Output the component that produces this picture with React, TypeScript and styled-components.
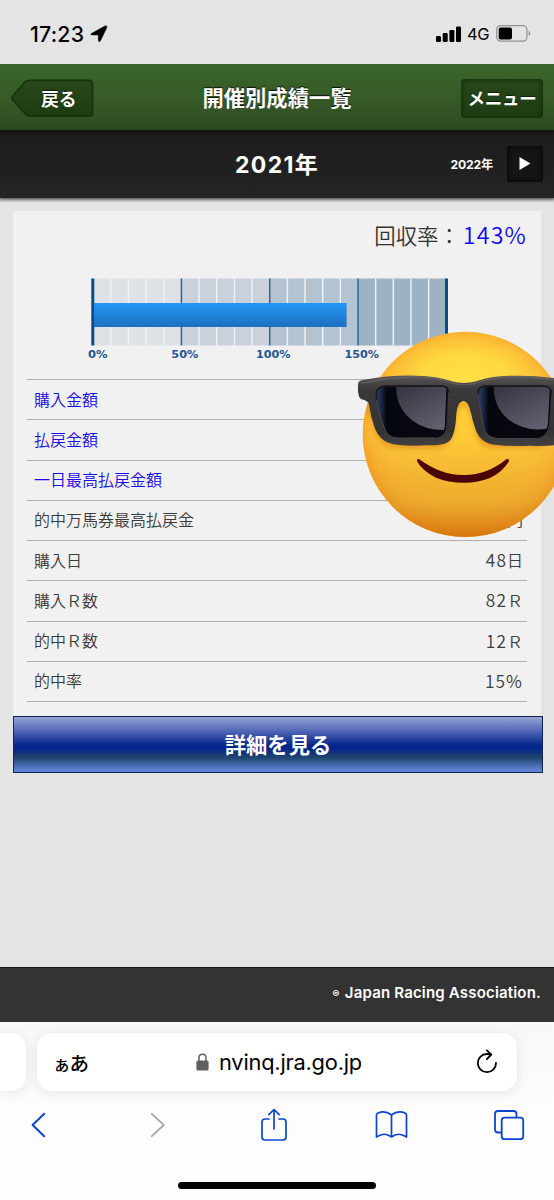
import React from "react";
import styled, { createGlobalStyle } from "styled-components";

const JP = '"Noto Sans CJK JP", sans-serif';
const UI = 'Inter, "Noto Sans CJK JP", sans-serif';

const GlobalStyle = createGlobalStyle`
  *, *::before, *::after { box-sizing: border-box; }
  html, body { margin: 0; padding: 0; background: #e4e4e4; }
  body { overflow: hidden; }
  svg { display: block; flex: none; }
`;

const Screen = styled.div`
  position: relative;
  width: 554px;
  height: 1200px;
  display: flex;
  flex-direction: column;
  overflow: hidden;
  background: #e4e4e4;
  font-family: ${JP};
`;

const StatusBar = styled.div`
  flex: none;
  height: 64px;
  padding: 3px 23px 0 30px;
  display: flex;
  align-items: center;
  color: #000;
  font-family: ${UI};
`;

const Clock = styled.span`
  width: 60px;
  font-size: 21.3px;
  font-weight: 500;
  letter-spacing: 0.2px;
  white-space: nowrap;
`;

const Network = styled.span`
  margin: 0 7px 0 6px;
  width: 22px;
  font-size: 16.5px;
  font-weight: 400;
  letter-spacing: -0.4px;
  white-space: nowrap;
`;

const Spacer = styled.div`
  flex: 1;
`;

const Header = styled.header`
  flex: none;
  height: 67px;
  padding: 2px 11px 0;
  display: flex;
  align-items: center;
  justify-content: space-between;
  background: linear-gradient(#3a652a, #365b27 50%, #2f4a22);
  border-bottom: 1px solid #1c2b14;
`;

const HeaderTitle = styled.h1`
  margin: -2px 1px 0 0;
  color: #fff;
  font-size: 21.3px;
  line-height: 30px;
  font-weight: 700;
  text-shadow: 0 -1px 1px rgba(0, 0, 0, 0.85);
`;

const BackButton = styled.div`
  position: relative;
  width: 83px;
  height: 39px;
  padding: 0 0 1px 30px;
  display: flex;
  align-items: center;
  color: #fff;
  font-size: 17.8px;
  font-weight: 700;
  text-shadow: 0 -1px 1px rgba(0, 0, 0, 0.6);

  svg { position: absolute; inset: 0; }
  span { position: relative; white-space: nowrap; }
`;

const MenuButton = styled.div`
  width: 82px;
  height: 39px;
  padding-bottom: 1px;
  display: flex;
  align-items: center;
  justify-content: center;
  border-radius: 4px;
  background: linear-gradient(#28491a, #1e3b12);
  box-shadow: inset 0 0 4px 1px #142c0b;
  color: #fff;
  font-size: 17.5px;
  font-weight: 700;
  letter-spacing: -0.3px;
  white-space: nowrap;
  text-shadow: 0 -1px 1px rgba(0, 0, 0, 0.6);
`;

const YearBar = styled.div`
  flex: none;
  height: 67px;
  padding: 0 11px 1px;
  display: grid;
  grid-template-columns: 1fr auto 1fr;
  align-items: center;
  background: linear-gradient(#121212, #1d1d1d 5px, #242424);
  box-shadow: 0 1px 3px 1px rgba(0, 0, 0, 0.6);
  color: #fff;
  font-family: ${UI};
  font-weight: 700;
`;

const CurrentYear = styled.div`
  grid-column: 2;
  padding-bottom: 3px;
  font-size: 23px;
  letter-spacing: 1.3px;
  white-space: nowrap;
`;

const NextYear = styled.div`
  display: flex;
  align-items: center;
  justify-content: flex-end;
  gap: 14px;
  font-size: 12.2px;

  span { padding-bottom: 1px; letter-spacing: -0.2px; }
`;

const NextButton = styled.div`
  width: 36px;
  height: 36px;
  display: flex;
  align-items: center;
  justify-content: center;
  border-radius: 3px;
  background: #151515;
  box-shadow: inset 0 0 4px 1px #050505;

  svg { margin-bottom: 2px; }
`;

const Content = styled.main`
  flex: 1;
  padding: 13px 11px 0 13px;
`;

const Card = styled.section`
  width: 528px;
  height: 505px;
  padding: 7px 14px 0;
  background: #f1f1f1;
`;

const Rate = styled.div`
  height: 34px;
  padding-bottom: 1px;
  display: flex;
  align-items: center;
  justify-content: flex-end;
  color: #333;
  font-size: 21.4px;
  font-weight: 350;
  line-height: 33px;
  white-space: nowrap;
`;

const RateValue = styled.span`
  margin-left: 3px;
  color: #1205ef;
  font-size: 23.2px;
  letter-spacing: 1.2px;
`;

const ChartBox = styled.div`
  height: 127px;
  padding: 26px 0 0 58px;
`;

const Stats = styled.dl`
  margin: 0;
  border-top: 1px solid #b0b0b0;
`;

const StatRow = styled.div<{ $link?: boolean }>`
  height: 40.25px;
  padding: 0 4px 2px 7px;
  display: flex;
  align-items: center;
  justify-content: space-between;
  border-bottom: 1px solid #b0b0b0;
  color: ${(p) => (p.$link ? "#1b0be8" : "#3b3b3b")};
  font-size: 16px;
  font-weight: 350;

  dt, dd { margin: 0; white-space: nowrap; }
`;

const Digits = styled.span`
  font-size: 17.3px;
  letter-spacing: 1.1px;
`;

const DetailButton = styled.div`
  height: 57px;
  padding-bottom: 2px;
  display: flex;
  align-items: center;
  justify-content: center;
  border: 1.5px solid #12264d;
  background: linear-gradient(#97a5d5, #5367b8 25%, #03258a 52%, #06268b 58%, #20456c 74%, #466bb4 88%, #6687de);
  color: #fff;
  font-size: 21.3px;
  font-weight: 700;
`;

const Footer = styled.footer`
  flex: none;
  height: 55px;
  padding: 0 13px 5px 0;
  display: flex;
  align-items: center;
  justify-content: flex-end;
  border-top: 1px solid #161616;
  background: #333;
  color: #fff;
  font-family: ${UI};
  font-size: 15px;
  font-weight: 600;
  letter-spacing: 0.18px;
  white-space: nowrap;
`;

const CopyrightMark = styled.span`
  margin-right: 5px;
  font-size: 8px;
`;

const Browser = styled.div`
  flex: none;
  height: 178px;
  display: flex;
  flex-direction: column;
  align-items: center;
  background: linear-gradient(#f8f8f8, #fdfdfd 55%, #fefefe);
  font-family: ${UI};
`;

const AddressRow = styled.div`
  width: 554px;
  height: 70px;
  padding-top: 11px;
  display: flex;
  gap: 11px;
`;

const PreviousTab = styled.div`
  width: 26px;
  height: 58px;
  border-radius: 0 15px 15px 0;
  background: #fff;
  box-shadow: 0 2px 14px rgba(0, 0, 0, 0.09);
`;

const AddressBar = styled.div`
  width: 480px;
  height: 58px;
  padding: 0 19px 0 16px;
  display: flex;
  align-items: center;
  border-radius: 15px;
  background: #fff;
  box-shadow: 0 2px 14px rgba(0, 0, 0, 0.09);
  color: #000;
`;

const TextSize = styled.div`
  width: 143px;
  font-family: ${JP};
  font-size: 19.5px;
  font-weight: 500;
  letter-spacing: -1px;
  white-space: nowrap;

  small { font-size: 17.5px; }
`;

const Url = styled.div`
  flex: 1;
  padding-left: 10px;
  font-size: 21.8px;
  letter-spacing: -0.2px;
  white-space: nowrap;
`;

const Toolbar = styled.nav`
  width: 554px;
  height: 66px;
  padding: 0 27px 0 20px;
  display: flex;
  align-items: center;
  justify-content: space-between;
  color: #0b45cf;
`;

const Tool = styled.div<{ $nudge?: number }>`
  width: 36px;
  display: flex;
  justify-content: center;
  padding-left: ${(p) => p.$nudge ?? 0}px;
`;

const HomeIndicator = styled.div`
  width: 198px;
  height: 7px;
  margin-top: 24px;
  border-radius: 4px;
  background: #000;
`;

const Sticker = styled.div`
  position: absolute;
  left: 340px;
  top: 320px;
  width: 214px;
  height: 230px;
  overflow: hidden;
`;

const stats: { label: string; digits?: string; unit?: string; link?: boolean }[] = [
  { label: "購入金額", link: true },
  { label: "払戻金額", link: true },
  { label: "一日最高払戻金額", link: true },
  { label: "的中万馬券最高払戻金", unit: "円" },
  { label: "購入日", digits: "48", unit: "日" },
  { label: "購入Ｒ数", digits: "82", unit: "Ｒ" },
  { label: "的中Ｒ数", digits: "12", unit: "Ｒ" },
  { label: "的中率", digits: "15%" },
];

const bands = ["#dee1e6", "#c9d2db", "#b3c3d0", "#9eb2c6"];
const STEP = 17.66;

function RateChart() {
  return (
    <svg width="380" height="90" viewBox="85 278 380 90">
      <defs>
        <linearGradient id="bar" x1="0" y1="0" x2="0" y2="1">
          <stop offset="0" stopColor="#2496f5" />
          <stop offset="1" stopColor="#1b70bf" />
        </linearGradient>
      </defs>
      {bands.map((c, i) => (
        <rect key={c} x={93 + i * STEP * 5} y="278.5" width={STEP * 5} height="67" fill={c} />
      ))}
      {Array.from({ length: 19 }, (_, i) => i + 1).map((i) => (
        <rect
          key={i}
          x={93 + i * STEP - 0.6}
          y="278.5"
          width="1.4"
          height="67"
          fill={i % 5 ? "#f0f3f6" : "#1f62a0"}
        />
      ))}
      <rect x="91.3" y="278.5" width="3" height="67" fill="#0b4c8c" />
      <rect x="445" y="278.5" width="3" height="67" fill="#0b4c8c" />
      <rect x="94" y="303" width="252.6" height="24" fill="url(#bar)" />
      <g fill="#1d5892" fontFamily='"DejaVu Sans", sans-serif' fontWeight="700" fontSize="10">
        <text x="88" y="357.8" textLength="19.5" lengthAdjust="spacingAndGlyphs">0%</text>
        <text x="171.3" y="357.8" textLength="27" lengthAdjust="spacingAndGlyphs">50%</text>
        <text x="256" y="357.8" textLength="34.5" lengthAdjust="spacingAndGlyphs">100%</text>
        <text x="344.5" y="357.8" textLength="34.5" lengthAdjust="spacingAndGlyphs">150%</text>
      </g>
    </svg>
  );
}

function CoolFace() {
  return (
    <svg width="214" height="230" viewBox="0 0 642 690">
      <defs>
        <radialGradient id="face" cx="376" cy="330" r="322" gradientUnits="userSpaceOnUse">
          <stop offset="0" stopColor="#ffcb36" />
          <stop offset="0.72" stopColor="#fdc63a" />
          <stop offset="0.88" stopColor="#fbba36" />
          <stop offset="1" stopColor="#f6a024" />
        </radialGradient>
        <linearGradient id="shade" x1="0" y1="0" x2="0" y2="1">
          <stop offset="0.5" stopColor="#d98214" stopOpacity="0" />
          <stop offset="0.82" stopColor="#d98a20" stopOpacity="0.42" />
          <stop offset="1" stopColor="#d06c08" stopOpacity="0.8" />
        </linearGradient>
        <radialGradient id="glow">
          <stop offset="0" stopColor="#ffe045" />
          <stop offset="0.55" stopColor="#ffdc42" stopOpacity="0.85" />
          <stop offset="1" stopColor="#ffd03a" stopOpacity="0" />
        </radialGradient>
        <linearGradient id="frame" x1="0" y1="0" x2="0" y2="1">
          <stop offset="0" stopColor="#5a5657" />
          <stop offset="0.2" stopColor="#3a3839" />
          <stop offset="0.8" stopColor="#343233" />
          <stop offset="1" stopColor="#454244" />
        </linearGradient>
        <linearGradient id="lens" x1="0" y1="0" x2="1" y2="0">
          <stop offset="0" stopColor="#34446e" />
          <stop offset="0.09" stopColor="#202c4e" />
          <stop offset="0.17" stopColor="#05070f" />
          <stop offset="1" stopColor="#080810" />
        </linearGradient>
        <linearGradient id="shine" x1="0" y1="0" x2="0.7" y2="1">
          <stop offset="0" stopColor="#33343f" />
          <stop offset="1" stopColor="#60606f" />
        </linearGradient>
        <filter id="soft" x="-10%" y="-10%" width="120%" height="130%">
          <feGaussianBlur stdDeviation="6" />
        </filter>
        <clipPath id="lensLeft">
          <path d="M135 199 H306 Q325 200 324 218 L320 312 Q319 349 286 353 H178 Q145 353 135 330 Q119 293 109 238 Q102 202 135 199Z" />
        </clipPath>
        <clipPath id="lensRight">
          <path d="M433 199 H610 Q636 200 634 221 L628 307 Q623 352 587 355 H472 Q438 351 430 320 L414 220 Q412 203 433 199Z" />
        </clipPath>
        <clipPath id="head">
          <circle cx="376" cy="343" r="308" />
        </clipPath>
      </defs>

      <circle cx="376" cy="343" r="308" fill="url(#face)" />
      <ellipse cx="376" cy="170" rx="230" ry="120" fill="url(#glow)" />
      <circle cx="376" cy="343" r="308" fill="url(#shade)" />
      <g clipPath="url(#head)">
        <path
          d="M58 245 L95 300 Q110 384 165 386 H290 Q338 378 344 330 Q350 262 371 258 Q390 262 402 325 Q410 376 450 384 H600 L680 330 V245Z"
          fill="#d77f0b"
          opacity="0.5"
          filter="url(#soft)"
        />
      </g>

      <path
        d="M54 194 Q54 181 69 180 Q155 164 230 167 Q290 168 335 184 Q371 194 409 184 Q455 166 525 167 Q600 166 680 180 V375 H650 Q620 379 570 377 Q505 380 464 374 Q422 370 407 329 Q397 299 392 275 Q385 243 370 243 Q352 244 349 281 Q346 352 324 366 Q309 377 260 376 Q180 380 147 369 Q119 359 105 326 Q91 290 87 253 Q84 242 64 238 Q52 231 54 194Z"
        fill="url(#frame)"
      />
      <path
        d="M64 190 Q155 170 230 171 Q290 172 335 189 Q371 199 409 189 Q455 171 525 171 Q600 170 680 184"
        fill="none"
        stroke="#777172"
        strokeWidth="4"
        opacity="0.5"
      />
      <g clipPath="url(#lensLeft)">
        <rect x="100" y="190" width="235" height="175" fill="url(#lens)" />
        <path d="M169 195 H335 V329 Q263 336 218 302 Q166 262 169 195Z" fill="url(#shine)" />
        <path d="M324 195 L319 320 Q314 352 286 353" fill="none" stroke="#090a10" strokeWidth="9" />
      </g>
      <g clipPath="url(#lensRight)">
        <rect x="405" y="190" width="240" height="175" fill="url(#lens)" />
        <path d="M461 195 H642 V322 Q565 342 506 299 Q459 260 461 195Z" fill="url(#shine)" />
        <path d="M634 195 L628 307 Q623 352 587 355" fill="none" stroke="#090a10" strokeWidth="8" />
      </g>
      <g fill="none" strokeWidth="4">
        <path d="M110 238 Q102 202 135 198 H306 Q325 199 325 218" stroke="#171518" />
        <path d="M415 221 Q412 202 433 198 H610 Q636 200 634 221" stroke="#171518" />
        <path d="M109 240 Q119 293 135 330 Q145 354 178 355 H286" stroke="#4a464c" strokeWidth="3" />
        <path d="M415 230 L430 320 Q438 354 472 356 H587" stroke="#4a464c" strokeWidth="3" />
      </g>
      <path
        d="M232 425 Q229 415 238 418 Q305 467 371 465 Q440 466 499 418 Q508 414 507 424 Q488 456 450 474 Q410 489 371 488 Q325 488 288 473 Q246 451 232 425Z"
        fill="#4a0403"
      />
    </svg>
  );
}

export default function App() {
  return (
    <Screen>
      <GlobalStyle />
      <StatusBar>
        <Clock>17:23</Clock>
        <svg width="18" height="18" viewBox="0 0 18 18">
          <path d="M1.4 8.6 L15 1 Q17.4 .2 16.8 2.6 L10.4 15.8 Q9 17.8 8.4 15.400 L8.400 9.900 L2.200 9.900 Q-.2 9.800 1.400 8.600Z" stroke="#000" strokeWidth="0.6" />
        </svg>
        <Spacer />
        <svg width="25" height="16" viewBox="0 0 25 16">
          <rect x="0" y="10" width="5" height="6" rx="1.2" />
          <rect x="6.7" y="7" width="5" height="9" rx="1.2" />
          <rect x="13.4" y="4" width="5" height="12" rx="1.2" />
          <rect x="20" y="0.5" width="5" height="15.5" rx="1.2" />
        </svg>
        <Network>4G</Network>
        <svg width="35" height="17" viewBox="0 0 35 17">
          <rect x="0.7" y="0.7" width="30.3" height="15.5" rx="4.2" fill="none" stroke="#929292" strokeWidth="1.2" />
          <rect x="2.7" y="2.6" width="13.3" height="11.8" rx="2" />
          <path d="M32.7 5.8 Q36 8.5 32.7 11Z" fill="#929292" />
        </svg>
      </StatusBar>

      <Header>
        <BackButton>
          <svg width="83" height="39" viewBox="0 0 83 39">
            <defs>
              <linearGradient id="back" x1="0" y1="0" x2="0" y2="1">
                <stop offset="0" stopColor="#28491a" />
                <stop offset="1" stopColor="#1e3b12" />
              </linearGradient>
            </defs>
            <path
              d="M1.5 17.5 L14 3 Q16 1.3 19 1.3 H78 Q81.5 1.3 81.5 4.5 V34 Q81.5 37 78 37 H19 Q16 37 14 34.5 L1.5 20.5 Q.5 19 1.5 17.5Z"
              fill="url(#back)"
              stroke="#183310"
              strokeWidth="1.8"
            />
          </svg>
          <span>戻る</span>
        </BackButton>
        <HeaderTitle>開催別成績一覧</HeaderTitle>
        <MenuButton>メニュー</MenuButton>
      </Header>

      <YearBar>
        <CurrentYear>2021年</CurrentYear>
        <NextYear>
          <span>2022年</span>
          <NextButton>
            <svg width="12" height="13" viewBox="0 0 12 13">
              <path d="M0.5 0 L11.5 6.5 L0.5 13Z" fill="#fff" />
            </svg>
          </NextButton>
        </NextYear>
      </YearBar>

      <Content>
        <Card>
          <Rate>
            回収率：<RateValue>143%</RateValue>
          </Rate>
          <ChartBox>
            <RateChart />
          </ChartBox>
          <Stats>
            {stats.map((s) => (
              <StatRow key={s.label} $link={s.link}>
                <dt>{s.label}</dt>
                <dd>
                  {s.digits && <Digits>{s.digits}</Digits>}
                  {s.unit}
                </dd>
              </StatRow>
            ))}
          </Stats>
        </Card>
        <DetailButton>詳細を見る</DetailButton>
      </Content>

      <Footer>
        <CopyrightMark>©</CopyrightMark>
        Japan Racing Association.
      </Footer>

      <Browser>
        <AddressRow>
          <PreviousTab />
          <AddressBar>
            <TextSize>
              <small>ぁ</small>あ
            </TextSize>
            <svg width="13" height="18" viewBox="0 0 13 18">
              <path d="M3 9 V4.8 Q3 1.2 6.5 1.2 T10 4.8 V9" fill="none" stroke="#606064" strokeWidth="1.5" />
              <rect x="0.4" y="7.6" width="12.2" height="10" rx="1.7" fill="#606064" />
            </svg>
            <Url>nvinq.jra.go.jp</Url>
            <svg width="22" height="26" viewBox="0 0 22 26" fill="none" stroke="#000" strokeWidth="1.8" strokeLinecap="round" strokeLinejoin="round">
              <path d="M20 13.8 A9.1 9.1 0 1 1 11 5 L15 5.5" />
              <path d="M10.9 1.3 L15.3 5.6 L10.9 10" />
            </svg>
          </AddressBar>
        </AddressRow>
        <Toolbar>
          <Tool>
            <svg width="16" height="26" viewBox="0 0 16 26" fill="none" stroke="currentColor" strokeWidth="2" strokeLinecap="round" strokeLinejoin="round">
              <path d="M14.2 1.8 L2.6 13 L14.2 24.2" />
            </svg>
          </Tool>
          <Tool $nudge={5}>
            <svg width="16" height="26" viewBox="0 0 16 26" fill="none" stroke="#a9a9ab" strokeWidth="1.8" strokeLinecap="round" strokeLinejoin="round">
              <path d="M1.8 1.8 L13.8 13 L1.8 24.2" />
            </svg>
          </Tool>
          <Tool>
            <svg width="28" height="34" viewBox="0 0 28 34" fill="none" stroke="currentColor" strokeWidth="1.7" strokeLinecap="round" strokeLinejoin="round">
              <path d="M9 11 H5 Q2 11 2 14 V29 Q2 32 5 32 H23 Q26 32 26 29 V14 Q26 11 23 11 H19" />
              <path d="M14 21 V1.5 M8.8 6.7 L14 1.5 L19.2 6.7" />
            </svg>
          </Tool>
          <Tool>
            <svg width="33" height="28" viewBox="0 0 33 28" fill="none" stroke="currentColor" strokeWidth="1.7" strokeLinejoin="round">
              <path d="M16.5 4 Q10 -1 2.6 2.2 Q1.5 2.7 1.5 4 V26 Q9.5 20.5 16.5 26 Q23.5 20.5 31.5 26 V4 Q31.5 2.7 30.4 2.2 Q23 -1 16.5 4 V26" />
            </svg>
          </Tool>
          <Tool>
            <svg width="32" height="32" viewBox="0 0 32 32" fill="none" stroke="currentColor" strokeWidth="1.8">
              <path d="M8.5 23.5 H5 Q2 23.5 2 20.5 V5 Q2 2 5 2 H20.5 Q23.5 2 23.5 5 V8.5" />
              <rect x="8.7" y="8.7" width="21.5" height="21.5" rx="3" />
            </svg>
          </Tool>
        </Toolbar>
        <HomeIndicator />
      </Browser>

      <Sticker>
        <CoolFace />
      </Sticker>
    </Screen>
  );
}
